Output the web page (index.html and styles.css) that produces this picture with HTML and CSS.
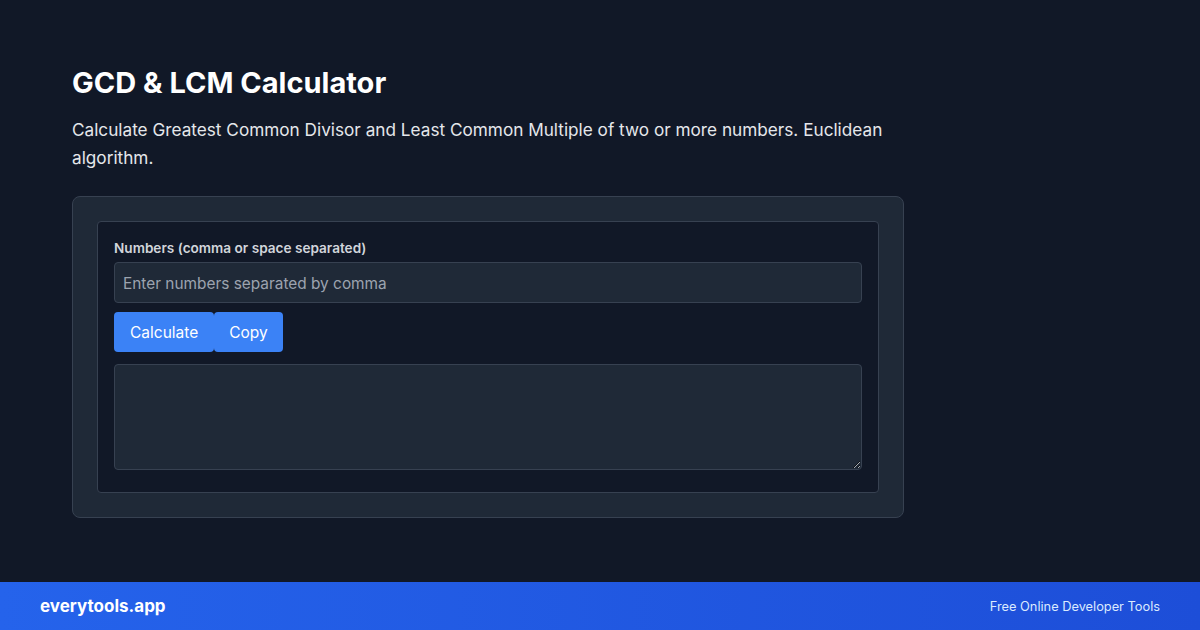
FILE: index.html
```html
<!DOCTYPE html>
<html lang="en">
<head>
<meta charset="utf-8">
<title>GCD &amp; LCM Calculator</title>
<link rel="stylesheet" href="styles.css">
</head>
<body>
<main class="main">
  <h1 class="title">GCD &amp; LCM Calculator</h1>
  <p class="desc">Calculate Greatest Common Divisor and Least Common Multiple of two or more numbers. Euclidean algorithm.</p>
  <section class="card">
    <div class="panel">
      <label class="label" for="nums">Numbers (comma or space separated)</label>
      <input class="input" id="nums" type="text" placeholder="Enter numbers separated by comma">
      <div class="actions">
        <button class="btn">Calculate</button>
        <button class="btn">Copy</button>
      </div>
      <textarea class="output" readonly></textarea>
    </div>
  </section>
</main>
<footer class="footer">
  <span class="brand">everytools.app</span>
  <span class="tagline">Free Online Developer Tools</span>
</footer>
</body>
</html>
```

FILE: styles.css
```css
* { box-sizing: border-box; }
html, body { margin: 0; padding: 0; }
body {
  width: 1200px;
  height: 630px;
  overflow: hidden;
  background: #111827;
  color: #f9fafb;
  font-family: Inter, "Noto Sans", "Liberation Sans", sans-serif;
  display: flex;
  flex-direction: column;
}
.main {
  flex: 1;
  padding: 66px 72px 0;
}
.title {
  margin: 0;
  font-size: 29px;
  line-height: 34px;
  font-weight: 700;
  color: #ffffff;
}
.desc {
  margin: 16px 0 24px;
  width: 832px;
  font-size: 17.2px;
  line-height: 28px;
  color: #e5e7eb;
}
.card {
  width: 832px;
  background: #1f2937;
  border: 1px solid #374151;
  border-radius: 8px;
  padding: 24px;
}
.panel {
  background: #111827;
  border: 1px solid #374151;
  border-radius: 4px;
  padding: 16px 16px 22px;
  display: flex;
  flex-direction: column;
}
.label {
  font-size: 13.6px;
  line-height: 18px;
  padding-top: 1px;
  font-weight: 600;
  color: #d1d5db;
  margin-bottom: 5px;
}
.input {
  width: 100%;
  height: 41px;
  background: #1f2937;
  border: 1px solid #374151;
  border-radius: 4px;
  padding: 1px 8px 0;
  font-family: inherit;
  font-size: 15.4px;
  color: #f3f4f6;
  outline: none;
}
.input::placeholder { color: #9ca3af; }
.actions {
  display: flex;
  margin-top: 9px;
}
.btn {
  height: 40px;
  padding: 0 16px;
  background: #3b82f6;
  color: #ffffff;
  border: none;
  border-radius: 4px;
  font-family: inherit;
  font-size: 15.5px;
  cursor: pointer;
}
.btn + .btn { padding: 0 15px; }
.output {
  margin-top: 12px;
  width: 100%;
  height: 106px;
  background: #1f2937;
  border: 1px solid #374151;
  border-radius: 4px;
  color: #f3f4f6;
  font-family: inherit;
  font-size: 14px;
  padding: 8px;
  outline: none;
  display: block;
}
.footer {
  height: 48px;
  flex: none;
  background: linear-gradient(90deg, #2563eb, #1d4ed8);
  display: flex;
  align-items: center;
  justify-content: space-between;
  padding: 0 40px;
}
.brand {
  font-size: 17px;
  font-weight: 700;
  color: #ffffff;
}
.tagline {
  font-size: 12.8px;
  color: #dbeafe;
}
```
